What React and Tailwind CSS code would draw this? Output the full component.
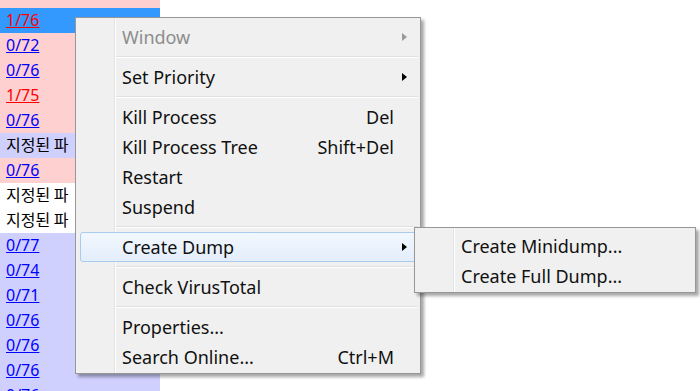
const rows = [
  { bg: 'bg-[#ffd0d0]', h: 'h-[8px]', text: '' },
  { bg: 'bg-[#3399ff]', text: '1/76', kind: 'red' },
  { bg: 'bg-[#ffd0d0]', text: '0/72', kind: 'blue' },
  { bg: 'bg-[#ffd0d0]', text: '0/76', kind: 'blue' },
  { bg: 'bg-[#ffd0d0]', text: '1/75', kind: 'red' },
  { bg: 'bg-[#ffd0d0]', text: '0/76', kind: 'blue' },
  { bg: 'bg-[#d0d0ff]', text: '지정된 파', kind: 'ko' },
  { bg: 'bg-[#ffd0d0]', text: '0/76', kind: 'blue' },
  { bg: 'bg-white', text: '지정된 파', kind: 'ko' },
  { bg: 'bg-white', text: '지정된 파', kind: 'ko' },
  { bg: 'bg-[#d0d0ff]', text: '0/77', kind: 'blue' },
  { bg: 'bg-[#d0d0ff]', text: '0/74', kind: 'blue' },
  { bg: 'bg-[#d0d0ff]', text: '0/71', kind: 'blue' },
  { bg: 'bg-[#d0d0ff]', text: '0/76', kind: 'blue' },
  { bg: 'bg-[#d0d0ff]', text: '0/76', kind: 'blue' },
  { bg: 'bg-[#d0d0ff]', text: '0/76', kind: 'blue' },
  { bg: 'bg-[#d0d0ff]', text: '0/76', kind: 'blue' },
]

const menu = [
  { label: 'Window', arrow: true, disabled: true },
  'sep',
  { label: 'Set Priority', arrow: true },
  'sep',
  { label: 'Kill Process', key: 'Del' },
  { label: 'Kill Process Tree', key: 'Shift+Del' },
  { label: 'Restart' },
  { label: 'Suspend' },
  'sep',
  { label: 'Create Dump', arrow: true, active: true },
  'sep',
  { label: 'Check VirusTotal' },
  'sep',
  { label: 'Properties...' },
  { label: 'Search Online...', key: 'Ctrl+M' },
]

const gutter =
  'bg-[linear-gradient(to_right,#f0f0f0_38px,#e2e3e3_38px,#e2e3e3_39px,#ffffff_39px,#ffffff_40px,#f0f0f0_40px)]'

function Arrow({ disabled }) {
  return (
    <div
      className={`h-0 w-0 border-y-[4px] border-l-[5px] border-y-transparent ${
        disabled ? 'border-l-[#9a9a9a]' : 'border-l-black'
      }`}
    />
  )
}

function MenuItem({ item }) {
  return (
    <div
      className={`ml-[4px] mr-[3px] flex h-[30px] items-center rounded-[3px] border pl-[41px] pr-[9px] ${
        item.active
          ? 'border-[#a8cbf0] bg-[linear-gradient(to_bottom,#f2f7fe,#e3eefb)]'
          : 'border-transparent'
      }`}
    >
      <span className={`flex-1 ${item.disabled ? 'text-[#8d8d8d]' : 'text-[#111]'}`}>{item.label}</span>
      {item.key && <span className="text-[#111]">{item.key}</span>}
      <div className="flex w-[13px] justify-end">{item.arrow && <Arrow disabled={item.disabled} />}</div>
    </div>
  )
}

function Separator() {
  return (
    <div className="flex h-[10px] flex-col pt-[4px] pl-[40px] pr-[2px]">
      <div className="h-[1px] bg-[#e0e0e0]" />
      <div className="h-[1px] bg-white" />
    </div>
  )
}

export default function App() {
  return (
    <div className="relative h-[391px] w-[700px] overflow-hidden bg-white">
      {/* 프로세스 목록 컬럼 */}
      <div className="flex w-[160px] flex-col">
        {rows.map((r, i) => (
          <div key={i} className={`${r.h || 'h-[25px]'} shrink-0 overflow-hidden whitespace-nowrap pl-[6px] ${r.bg}`}>
            {r.kind === 'ko' ? (
              <span className="text-[16px] leading-[15px] text-black font-['Noto_Sans_CJK_KR',sans-serif]">{r.text}</span>
            ) : (
              <span
                className={`text-[16px] leading-[15px] underline font-['Noto_Sans',sans-serif] ${
                  r.kind === 'red' ? 'text-[#ff0000]' : 'text-[#0000ff]'
                }`}
              >
                {r.text}
              </span>
            )}
          </div>
        ))}
      </div>

      {/* 컨텍스트 메뉴 */}
      <div
        className={`absolute left-[75px] top-[17px] w-[346px] border border-[#979797] pt-[4px] pb-[1px] text-[18px] font-['Noto_Sans',sans-serif] shadow-[3px_3px_3px_rgba(0,0,0,0.35)] ${gutter}`}
      >
        {menu.map((m, i) => (m === 'sep' ? <Separator key={i} /> : <MenuItem key={i} item={m} />))}
      </div>

      {/* 하위 메뉴 */}
      <div
        className={`absolute left-[414px] top-[227px] w-[282px] border border-[#979797] pt-[3px] pb-[1px] text-[18px] font-['Noto_Sans',sans-serif] shadow-[3px_3px_3px_rgba(0,0,0,0.35)] ${gutter}`}
      >
        <MenuItem item={{ label: 'Create Minidump...' }} />
        <MenuItem item={{ label: 'Create Full Dump...' }} />
      </div>
    </div>
  )
}
